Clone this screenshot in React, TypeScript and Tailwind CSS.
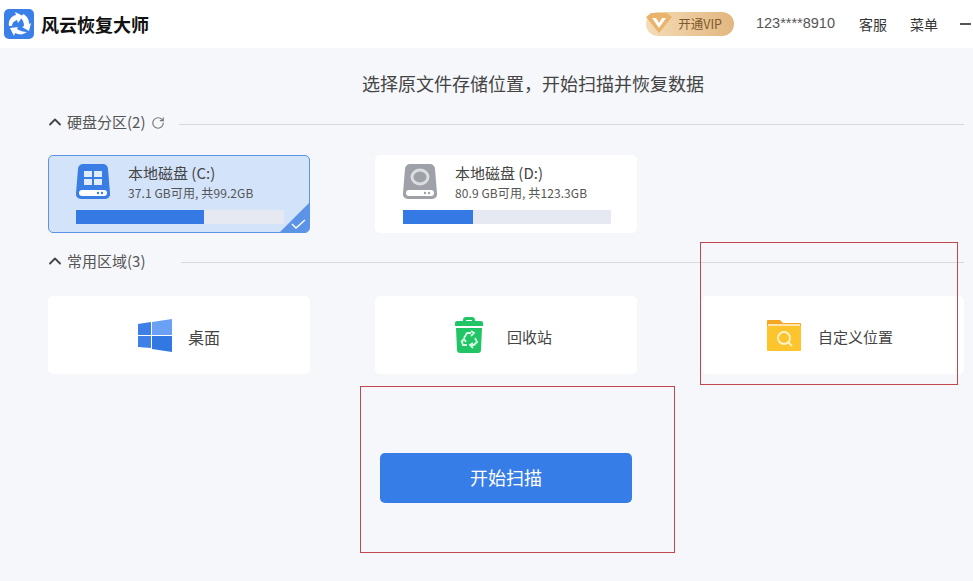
import { ChevronUp, RotateCw } from 'lucide-react';

const font = { fontFamily: '"Noto Sans CJK SC", sans-serif' };

const Logo = () => (
  <svg width="30" height="30" viewBox="0 0 30 30">
    <rect width="30" height="30" rx="5" fill="#3a80e8" />
    <path d="M5 17c-1-5 2-10 7-11l-1-3 8 4-5 7-1-3c-3 1-5 3-5 6z" fill="#fff" />
    <path d="M19 5c4 2 6 5 6 10l2-1-2 8-7-4 2-1c0-3-1-6-3-8z" fill="#fff" />
    <path d="M23 23c-4 3-8 3-12 1l-1 3-4-8 8-1-1 2c3 2 6 3 10 3z" fill="#fff" />
  </svg>
);

const VipBadge = () => (
  <div className="relative flex h-[24px] w-[88px] items-center justify-end rounded-full bg-gradient-to-r from-[#f5dcb8] to-[#e2b67f] pr-[12px] text-[12.5px] text-[#7d5a2e]">
    <svg className="absolute left-[0px] top-[1px]" width="26" height="20" viewBox="0 0 26 20">
      <path d="M0 4l5-4h16l5 4-13 16z" fill="#e9b36c" />
      <path d="M6 5h4l3 5 3-5h4l-7 10z" fill="#fff" />
    </svg>
    开通VIP
  </div>
);

const Section = ({ title, extra, lineClass }: { title: string; extra?: boolean; lineClass: string }) => (
  <div className="flex h-[20px] items-center text-[15px] text-[#555]">
    <ChevronUp size={20} strokeWidth={2.2} className="ml-[-3px] mr-[2px] text-[#444]" />
    <span>{title}</span>
    {extra && <RotateCw size={14} className="ml-[6px] mt-[2px] text-[#777]" />}
    <div className={`h-px flex-1 bg-[#d6d9e0] ${lineClass}`} />
  </div>
);

const DiskC = () => (
  <svg width="34" height="35" viewBox="0 0 34 35">
    <path d="M7 0h20a5 5 0 0 1 5 5l2 24a5 5 0 0 1-5 6H5a5 5 0 0 1-5-6L2 5a5 5 0 0 1 5-5z" fill="#3a7de4" />
    <rect x="8" y="7" width="8" height="6" fill="#fff" opacity=".85" />
    <rect x="18" y="7" width="8" height="6" fill="#fff" opacity=".85" />
    <rect x="8" y="15" width="8" height="6" fill="#fff" opacity=".85" />
    <rect x="18" y="15" width="8" height="6" fill="#fff" opacity=".85" />
    <rect x="3" y="26" width="28" height="6" rx="3" fill="#fff" />
    <circle cx="22" cy="29" r="1.2" fill="#3a7de4" />
    <circle cx="26" cy="29" r="1.2" fill="#3a7de4" />
  </svg>
);

const DiskD = () => (
  <svg width="34" height="35" viewBox="0 0 34 35">
    <path d="M7 0h20a5 5 0 0 1 5 5l2 24a5 5 0 0 1-5 6H5a5 5 0 0 1-5-6L2 5a5 5 0 0 1 5-5z" fill="#9ea1a8" />
    <ellipse cx="17" cy="13" rx="8" ry="7" fill="none" stroke="#dcdde0" strokeWidth="3" />
    <rect x="3" y="26" width="28" height="6" rx="3" fill="#fff" />
    <circle cx="22" cy="29" r="1.2" fill="#9ea1a8" />
    <circle cx="26" cy="29" r="1.2" fill="#9ea1a8" />
  </svg>
);

const WindowsIcon = () => (
  <svg width="34" height="33" viewBox="0 0 34 33">
    <path d="M0 5l13-2v13H0z" fill="#3d7fe6" />
    <path d="M14 3l20-3v16H14z" fill="#6aa1f4" />
    <path d="M0 17h13v12L0 28z" fill="#3f80e8" />
    <path d="M14 17h20v16l-20-3z" fill="#3278e2" />
  </svg>
);

const TrashIcon = () => (
  <svg width="28" height="36" viewBox="0 0 28 36">
    <path d="M8 3a3 3 0 0 1 3-3h6a3 3 0 0 1 3 3v2h-3V3h-6v2H8z" fill="#22c565" />
    <path d="M2 4h24a2 2 0 0 1 2 2v3H0V6a2 2 0 0 1 2-2z" fill="#22c565" />
    <path d="M1 11h26l-1 22a3 3 0 0 1-3 3H5a3 3 0 0 1-3-3z" fill="#22c565" />
    <path d="M9 21l3-5h4M16 14l3 2-3 3M20 21l2 4-3 3h-3M18 26l-3 2 3 3M12 28H8l-1-3 1-2M6 25l3-3 2 3" fill="none" stroke="#d5f6e2" strokeWidth="1.8" />
  </svg>
);

const FolderIcon = () => (
  <svg width="34" height="31" viewBox="0 0 34 31">
    <path d="M1 0h12l3 3h17a1 1 0 0 1 1 1v6H0V1a1 1 0 0 1 1-1z" fill="#f5a623" />
    <rect x="1" y="4" width="32" height="2" fill="#fde6ae" />
    <rect y="6" width="34" height="25" rx="1" fill="#fcc42d" />
    <circle cx="17" cy="18" r="6" fill="none" stroke="#fff2cc" strokeWidth="1.8" />
    <path d="M21 22l4 4" stroke="#fff2cc" strokeWidth="1.8" />
  </svg>
);

const DiskCard = ({ name, info, pct, selected, icon }: { name: string; info: string; pct: string; selected?: boolean; icon: React.ReactNode }) => (
  <div className={`relative h-[78px] w-[262px] overflow-hidden rounded-[5px] ${selected ? 'border border-[#5b94e6] bg-[#d3e3fa] pl-[27px] pt-[8px]' : 'bg-white pl-[28px] pt-[9px]'}`}>
    <div className="flex h-[36px]">
      {icon}
      <div className="ml-[18px] mt-[-1px]">
        <div className="text-[15px] leading-[20px] text-[#444]">{name}</div>
        <div className="text-[12px] leading-[20px] tracking-[0.1px] text-[#555]">{info}</div>
      </div>
    </div>
    <div className="mt-[10px] h-[14px] w-[208px] bg-[#e6e9f1]">
      <div className={`h-full bg-[#3579e4] ${pct}`} />
    </div>
    {selected && (
      <svg className="absolute bottom-0 right-0" width="29" height="29" viewBox="0 0 29 29">
        <path d="M29 0v29H0z" fill="#5b94e6" />
        <path d="M12 21l4 4 9-8" fill="none" stroke="#fff" strokeWidth="1.4" />
      </svg>
    )}
  </div>
);

const PlaceCard = ({ label, icon, boxClass }: { label: string; icon: React.ReactNode; boxClass: string }) => (
  <div className={`flex h-[78px] w-[262px] items-center justify-center rounded-[5px] bg-white text-[#444] ${boxClass}`}>
    {icon}
    <span className="mt-[4px]">{label}</span>
  </div>
);

const App = () => {
  return (
    <div className="relative h-[581px] w-[973px] overflow-hidden bg-[#f5f7fb]" style={font}>
      <header className="flex h-[48px] items-center bg-white pl-[4px] pr-[2px]">
        <Logo />
        <span className="ml-[7px] text-[18px] font-bold text-[#111]">风云恢复大师</span>
        <div className="ml-auto flex items-center text-[14px] text-[#333]">
          <VipBadge />
          <span className="ml-[22px] text-[14.5px] text-[#555]" style={{ fontFamily: '"Liberation Sans", sans-serif' }}>123****8910</span>
          <span className="ml-[24px]">客服</span>
          <span className="ml-[23px]">菜单</span>
          <span className="ml-[22px] h-[2px] w-[11px] bg-[#555]" />
        </div>
      </header>

      <h1 className="mt-[22px] ml-[93px] text-center text-[18px] leading-[26px] text-[#444]">
        选择原文件存储位置，开始扫描并恢复数据
      </h1>

      <div className="mt-[16px] pl-[48px] pr-[9px]">
        <Section title="硬盘分区(2)" extra lineClass="ml-[14px] mt-[4px]" />
        <div className="mt-[22px] flex gap-[65px] pt-px">
          <DiskCard name="本地磁盘 (C:)" info="37.1 GB可用, 共99.2GB" pct="w-[128px]" selected icon={<DiskC />} />
          <DiskCard name="本地磁盘 (D:)" info="80.9 GB可用, 共123.3GB" pct="w-[70px]" icon={<DiskD />} />
        </div>

        <div className="mt-[18px]">
          <Section title="常用区域(3)" lineClass="ml-[36px] mt-[2px]" />
        </div>
        <div className="mt-[25px] flex gap-[65px]">
          <PlaceCard label="桌面" boxClass="gap-[16px] text-[16px]" icon={<WindowsIcon />} />
          <PlaceCard label="回收站" boxClass="gap-[24px] pr-[5px] text-[15px]" icon={<TrashIcon />} />
          <PlaceCard label="自定义位置" boxClass="gap-[17px] pr-[6px] text-[15px]" icon={<FolderIcon />} />
        </div>

        <button className="ml-[332px] mt-[79px] flex h-[50px] w-[252px] items-center justify-center rounded-[5px] bg-[#377de8] pb-[2px] text-[18px] text-white">
          开始扫描
        </button>
      </div>

      <div className="absolute left-[700px] top-[242px] h-[143px] w-[258px] border border-[#c0474c]" />
      <div className="absolute left-[360px] top-[386px] h-[167px] w-[315px] border border-[#c0474c]" />
    </div>
  );
};

export default App;
